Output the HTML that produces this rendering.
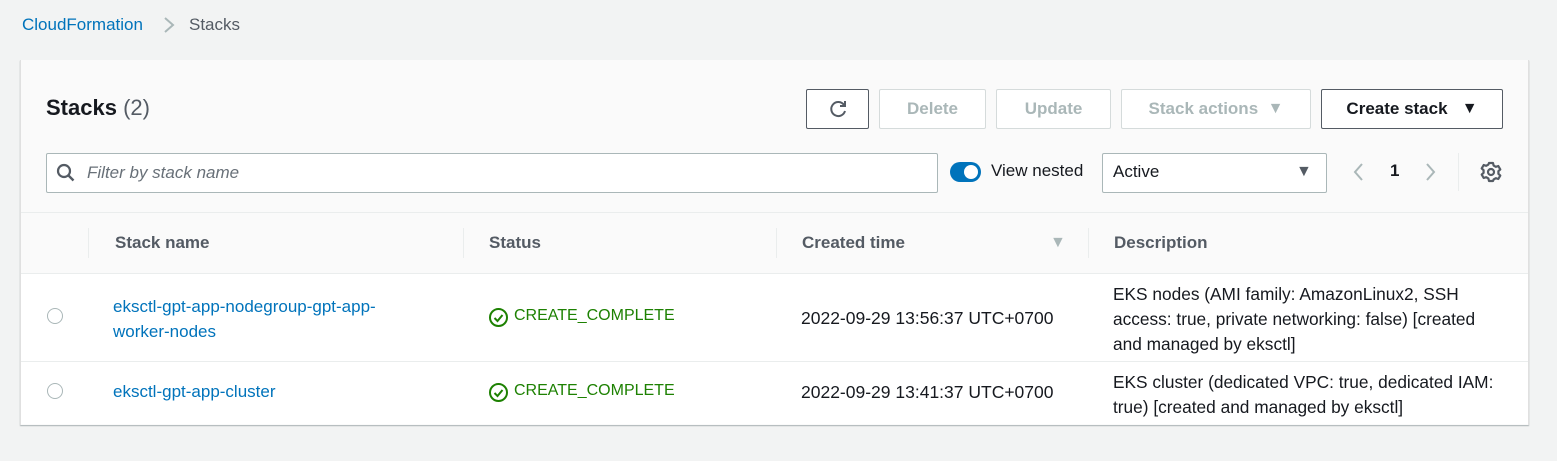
<!DOCTYPE html>
<html><head><style>
*{box-sizing:border-box;margin:0;padding:0}
body{width:1557px;height:461px;background:#f2f3f3;font-family:"Liberation Sans",sans-serif;font-size:16px;color:#16191f;position:relative;overflow:hidden}
.a{position:absolute;white-space:nowrap}
.card{position:absolute;left:20px;top:60px;width:1509px;height:365px;background:#fafafa;border-left:1px solid #e0e0e0;border-right:1px solid #e0e0e0;box-shadow:0 1px 1px rgba(0,28,36,.3);}
.btn{position:absolute;top:89px;height:40px;border:1px solid #d5dbdb;border-radius:2px;background:#fff;color:#aab7b8;font-weight:bold;display:flex;align-items:center;justify-content:center;font-size:17px}
.blk{border-color:#545b64;color:#545b64}
.link{color:#0073bb}
.ok{color:#1d8102}
.th{font-weight:bold;color:#545b64;font-size:17px}
.radio{position:absolute;width:16px;height:16px;border:1.5px solid #aab7b8;border-radius:50%;background:#fff}
.tri{font-size:16px}
</style></head><body>
<div class="a link" style="left:22px;top:15px;font-size:17px">CloudFormation</div>
<svg class="a" style="left:163px;top:16px" width="12" height="18"><path d="M2 2l8 7-8 7" fill="none" stroke="#aab7b8" stroke-width="2"/></svg>
<div class="a" style="left:189px;top:15px;color:#545b64;font-size:17px">Stacks</div>
<div class="card">
<div style="position:absolute;left:0;top:152px;width:100%;height:1px;background:#eaeded"></div>
<div style="position:absolute;left:0;top:213px;width:100%;height:151px;background:#fff;border-top:1px solid #eaeded"></div>
<div style="position:absolute;left:0;top:301px;width:100%;height:1px;background:#eaeded"></div>
</div>
<div class="a" style="left:46px;top:95px;font-size:22px;font-weight:bold">Stacks <span style="font-weight:normal;color:#545b64">(2)</span></div>
<div class="btn blk" style="left:806px;width:63px"><svg width="22" height="22" viewBox="0 0 22 22"><path d="M17 7A7 7 0 1 0 18 13" fill="none" stroke="#545b64" stroke-width="2"/><path d="M18 3v5h-5" fill="none" stroke="#545b64" stroke-width="2"/></svg></div>
<div class="btn" style="left:879px;width:107px">Delete</div>
<div class="btn" style="left:996px;width:115px">Update</div>
<div class="btn" style="left:1121px;width:190px">Stack actions&nbsp;&nbsp;<span class="tri">▼</span></div>
<div class="btn blk" style="left:1321px;width:182px;color:#16191f">Create stack&nbsp;&nbsp;&nbsp;<span class="tri">▼</span></div>
<div class="a" style="left:46px;top:153px;width:892px;height:40px;border:1px solid #aab7b8;border-radius:2px;background:#fff"></div>
<svg class="a" style="left:56px;top:163px" width="20" height="20"><circle cx="8" cy="8" r="6" fill="none" stroke="#545b64" stroke-width="2.2"/><path d="M12.5 12.5l5 5" stroke="#545b64" stroke-width="2.4"/></svg>
<div class="a" style="left:87px;top:163px;font-style:italic;color:#687078;font-size:17px">Filter by stack name</div>
<div class="a" style="left:950px;top:162px;width:31px;height:20px;border-radius:10px;background:#0073bb"></div>
<div class="a" style="left:964px;top:165px;width:14px;height:14px;border-radius:50%;background:#fff"></div>
<div class="a" style="left:991px;top:161px;font-size:17px">View nested</div>
<div class="a" style="left:1102px;top:153px;width:225px;height:40px;border:1px solid #aab7b8;border-radius:2px;background:#fff"></div>
<div class="a" style="left:1113px;top:162px;font-size:17px">Active</div>
<div class="a" style="left:1296px;top:163px;font-size:16px;color:#545b64">▼</div>
<svg class="a" style="left:1351px;top:162px" width="14" height="20"><path d="M11 2L4 10l7 8" fill="none" stroke="#aab7b8" stroke-width="2"/></svg>
<div class="a" style="left:1390px;top:161px;font-weight:bold;font-size:17px">1</div>
<svg class="a" style="left:1424px;top:162px" width="14" height="20"><path d="M3 2l7 8-7 8" fill="none" stroke="#aab7b8" stroke-width="2"/></svg>
<div class="a" style="left:1458px;top:153px;width:1px;height:38px;background:#eaeded"></div>
<svg class="a" style="left:1480px;top:161px" width="22" height="22" viewBox="0 0 22 22"><circle cx="11" cy="11" r="3" fill="none" stroke="#545b64" stroke-width="2.2"/><path d="M9 2h4l.6 2.5 2.2 1.3 2.5-.8 2 3.4-1.9 1.8v2.6l1.9 1.8-2 3.4-2.5-.8-2.2 1.3L13 20H9l-.6-2.5-2.2-1.3-2.5.8-2-3.4 1.9-1.8V9.2L1.7 7.4l2-3.4 2.5.8 2.2-1.3z" fill="none" stroke="#545b64" stroke-width="2.2" stroke-linejoin="round"/></svg>
<div class="a" style="left:88px;top:228px;width:1px;height:30px;background:#eaeded"></div>
<div class="a" style="left:463px;top:228px;width:1px;height:30px;background:#eaeded"></div>
<div class="a" style="left:776px;top:228px;width:1px;height:30px;background:#eaeded"></div>
<div class="a" style="left:1088px;top:228px;width:1px;height:30px;background:#eaeded"></div>
<div class="a th" style="left:115px;top:233px">Stack name</div>
<div class="a th" style="left:489px;top:233px">Status</div>
<div class="a th" style="left:802px;top:233px">Created time</div>
<div class="a" style="left:1050px;top:234px;font-size:16px;color:#aab7b8">▼</div>
<div class="a th" style="left:1114px;top:233px">Description</div>
<div class="radio" style="left:47px;top:308px"></div>
<div class="radio" style="left:47px;top:383px"></div>
<div class="a link" style="left:113px;top:294px;line-height:25px;font-size:17px">eksctl-gpt-app-nodegroup-gpt-app-<br>worker-nodes</div>
<div class="a link" style="left:113px;top:382px;font-size:17px">eksctl-gpt-app-cluster</div>
<svg class="a" style="left:488px;top:307px" width="21" height="21"><circle cx="10.5" cy="10.5" r="8.5" fill="none" stroke="#1d8102" stroke-width="2"/><path d="M6.5 11l3 3 5-6" fill="none" stroke="#1d8102" stroke-width="2"/></svg>
<svg class="a" style="left:488px;top:382px" width="21" height="21"><circle cx="10.5" cy="10.5" r="8.5" fill="none" stroke="#1d8102" stroke-width="2"/><path d="M6.5 11l3 3 5-6" fill="none" stroke="#1d8102" stroke-width="2"/></svg>
<div class="a ok" style="left:514px;top:307px;font-size:16px">CREATE_COMPLETE</div>
<div class="a ok" style="left:514px;top:382px;font-size:16px">CREATE_COMPLETE</div>
<div class="a" style="left:801px;top:308px;font-size:17.5px">2022-09-29 13:56:37 UTC+0700</div>
<div class="a" style="left:801px;top:382px;font-size:17.5px">2022-09-29 13:41:37 UTC+0700</div>
<div class="a" style="left:1113px;top:282px;line-height:25px;font-size:17.3px">EKS nodes (AMI family: AmazonLinux2, SSH<br>access: true, private networking: false) [created<br>and managed by eksctl]</div>
<div class="a" style="left:1113px;top:370px;line-height:25px;font-size:17.3px">EKS cluster (dedicated VPC: true, dedicated IAM:<br>true) [created and managed by eksctl]</div>
</body></html>
